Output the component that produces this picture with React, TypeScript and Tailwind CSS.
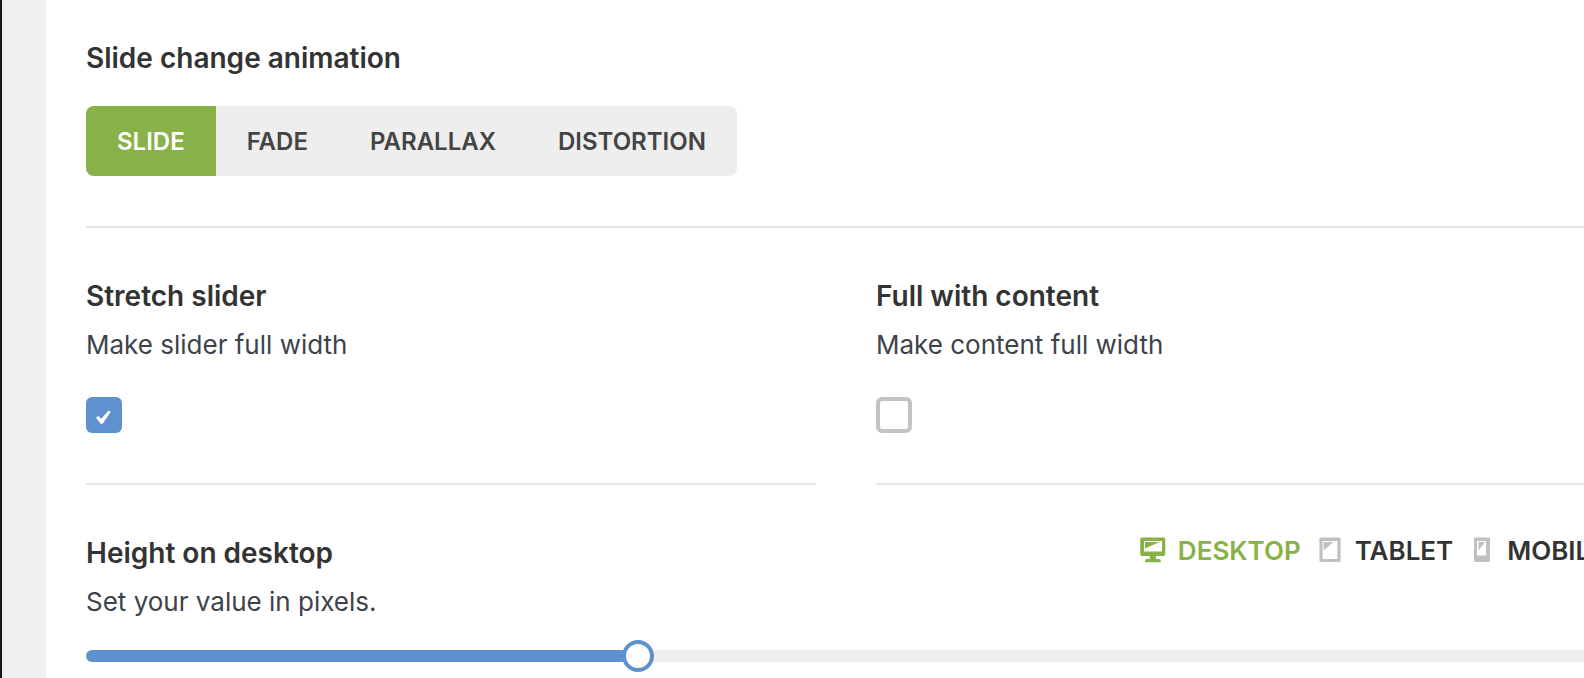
import { useState } from "react";
import type { ReactNode } from "react";

const animations = ["Slide", "Fade", "Parallax", "Distortion"];

function DesktopIcon() {
  return (
    <svg width="26" height="26" viewBox="0 0 26 26" fill="currentColor" aria-hidden="true">
      <path fillRule="evenodd" d="M2 0.5h21.5a1.8 1.8 0 0 1 1.8 1.8v15a1.8 1.8 0 0 1-1.8 1.8H16v3h3a2 2 0 0 1 1.8 1.8v1.3H5v-1.3a2 2 0 0 1 1.8-1.8h3v-3H2a1.8 1.8 0 0 1-1.8-1.8v-15A1.8 1.8 0 0 1 2 .5ZM4 4v10.500h18V4Z" />
      <path d="M5 5h14.5L5 11.4Z" />
    </svg>
  );
}

function TabletIcon() {
  return (
    <svg width="22" height="26" viewBox="0 0 22 26" fill="currentColor" aria-hidden="true">
      <path fillRule="evenodd" d="M1.8 0.5h18.4A1.4 1.4 0 0 1 21.6 2v21.6a1.4 1.4 0 0 1-1.4 1.4H1.8a1.4 1.4 0 0 1-1.4-1.4V2A1.4 1.4 0 0 1 1.8.5ZM3.6 4v18h14.8V4Z" />
      <path d="M4.6 5h9.8l-9.8 8.6Z" />
    </svg>
  );
}

function MobileIcon() {
  return (
    <svg width="16" height="26" viewBox="0 0 16 26" fill="currentColor" aria-hidden="true">
      <path fillRule="evenodd" d="M1.4 0.5h13.2A1.4 1.4 0 0 1 16 2v21.6a1.4 1.4 0 0 1-1.4 1.4H1.4A1.4 1.4 0 0 1 0 23.6V2A1.4 1.4 0 0 1 1.4.5ZM3 4v14.500h9V4Z" />
      <path d="M4.500 5h6.500l-6.500 8.600Z" />
    </svg>
  );
}

function Title({ children }: { children: ReactNode }) {
  return <h2 className="text-[28px] leading-10 font-semibold text-[#333]">{children}</h2>;
}

function Hint({ children }: { children: ReactNode }) {
  return <p className="mt-[13px] text-[26px] leading-8 text-[#3c434a]">{children}</p>;
}

function CheckField({ id, title, hint, initial }: { id: string; title: string; hint: string; initial: boolean }) {
  const [checked, setChecked] = useState(initial);
  return (
    <div className="border-b-2 border-[#e5e5e5] pt-12 pb-[50px]">
      <label htmlFor={id} className="block">
        <Title>{title}</Title>
        <Hint>{hint}</Hint>
      </label>
      <div className="mt-9 grid w-9">
        <input
          id={id}
          type="checkbox"
          checked={checked}
          onChange={(e) => setChecked(e.target.checked)}
          className="col-start-1 row-start-1 size-9 appearance-none rounded-md border-4 border-[#c3c3c3] bg-white checked:border-[#5e91cd] checked:bg-[#5e91cd]"
        />
        {checked && (
          <svg viewBox="0 0 36 36" className="pointer-events-none col-start-1 row-start-1 size-9" fill="#fff" aria-hidden="true">
            <path d="M10 20.800L12.300 18.900L15.400 21.800L21.800 14.200Q23.400 13.200 24.600 15L17 26.200Q15.600 27.600 14.200 26.200Z" />
          </svg>
        )}
      </div>
    </div>
  );
}

const devices = [
  { name: "Desktop", icon: <DesktopIcon /> },
  { name: "Tablet", icon: <TabletIcon /> },
  { name: "Mobile", icon: <MobileIcon /> },
];

export default function App() {
  const [animation, setAnimation] = useState("Slide");
  const [device, setDevice] = useState("Desktop");
  const [height, setHeight] = useState(360);
  const filled = height / 10;

  return (
    <div className="min-h-screen overflow-hidden border-l-2 border-[#12181f] bg-[#efefef] pl-11 font-['Inter',sans-serif]">
      <main className="-mr-[22px] min-h-screen bg-white pl-10">
        <section className="border-b-2 border-[#e5e5e5] pt-[38px] pb-[50px]">
          <Title>Slide change animation</Title>
          <div className="mt-7 inline-flex overflow-hidden rounded-lg bg-[#eee] align-top">
            {animations.map((name) => (
              <button
                key={name}
                type="button"
                aria-pressed={animation === name}
                onClick={() => setAnimation(name)}
                className={`h-[70px] px-[31px] pt-0.5 text-2xl font-semibold uppercase ${
                  animation === name ? "bg-[#88b147] text-white" : "text-[#444]"
                }`}
              >
                {name}
              </button>
            ))}
          </div>
        </section>

        <section className="grid grid-cols-2 gap-[60px]">
          <CheckField id="stretch" title="Stretch slider" hint="Make slider full width" initial={true} />
          <CheckField id="full" title="Full with content" hint="Make content full width" initial={false} />
        </section>

        <section className="pt-12">
          <div className="flex items-start justify-between">
            <label htmlFor="height">
              <Title>Height on {device.toLowerCase()}</Title>
              <Hint>Set your value in pixels.</Hint>
            </label>
            <div className="flex gap-4">
              {devices.map(({ name, icon }) => (
                <button
                  key={name}
                  type="button"
                  aria-pressed={device === name}
                  onClick={() => setDevice(name)}
                  className={`flex items-center gap-3 text-[26px] leading-9 font-semibold uppercase ${
                    device === name ? "text-[#88b147]" : "text-[#333]"
                  }`}
                >
                  <span className={`flex w-[26px] justify-center pb-0.5 ${device === name ? "text-[#88b147]" : "text-[#c0c0c0]"}`}>
                    {icon}
                  </span>
                  {name}
                </button>
              ))}
            </div>
          </div>
          <input
            id="height"
            type="range"
            min={0}
            max={1000}
            value={height}
            onChange={(e) => setHeight(Number(e.target.value))}
            style={{ backgroundImage: `linear-gradient(to right, #5e91cd ${filled}%, #eee ${filled}%)` }}
            className="mt-8 block h-3 w-full appearance-none rounded-full [&::-webkit-slider-runnable-track]:h-3 [&::-webkit-slider-thumb]:-mt-2.5 [&::-webkit-slider-thumb]:size-8 [&::-webkit-slider-thumb]:appearance-none [&::-webkit-slider-thumb]:rounded-full [&::-webkit-slider-thumb]:border-4 [&::-webkit-slider-thumb]:border-[#5e91cd] [&::-webkit-slider-thumb]:bg-white"
          />
        </section>
      </main>
    </div>
  );
}
